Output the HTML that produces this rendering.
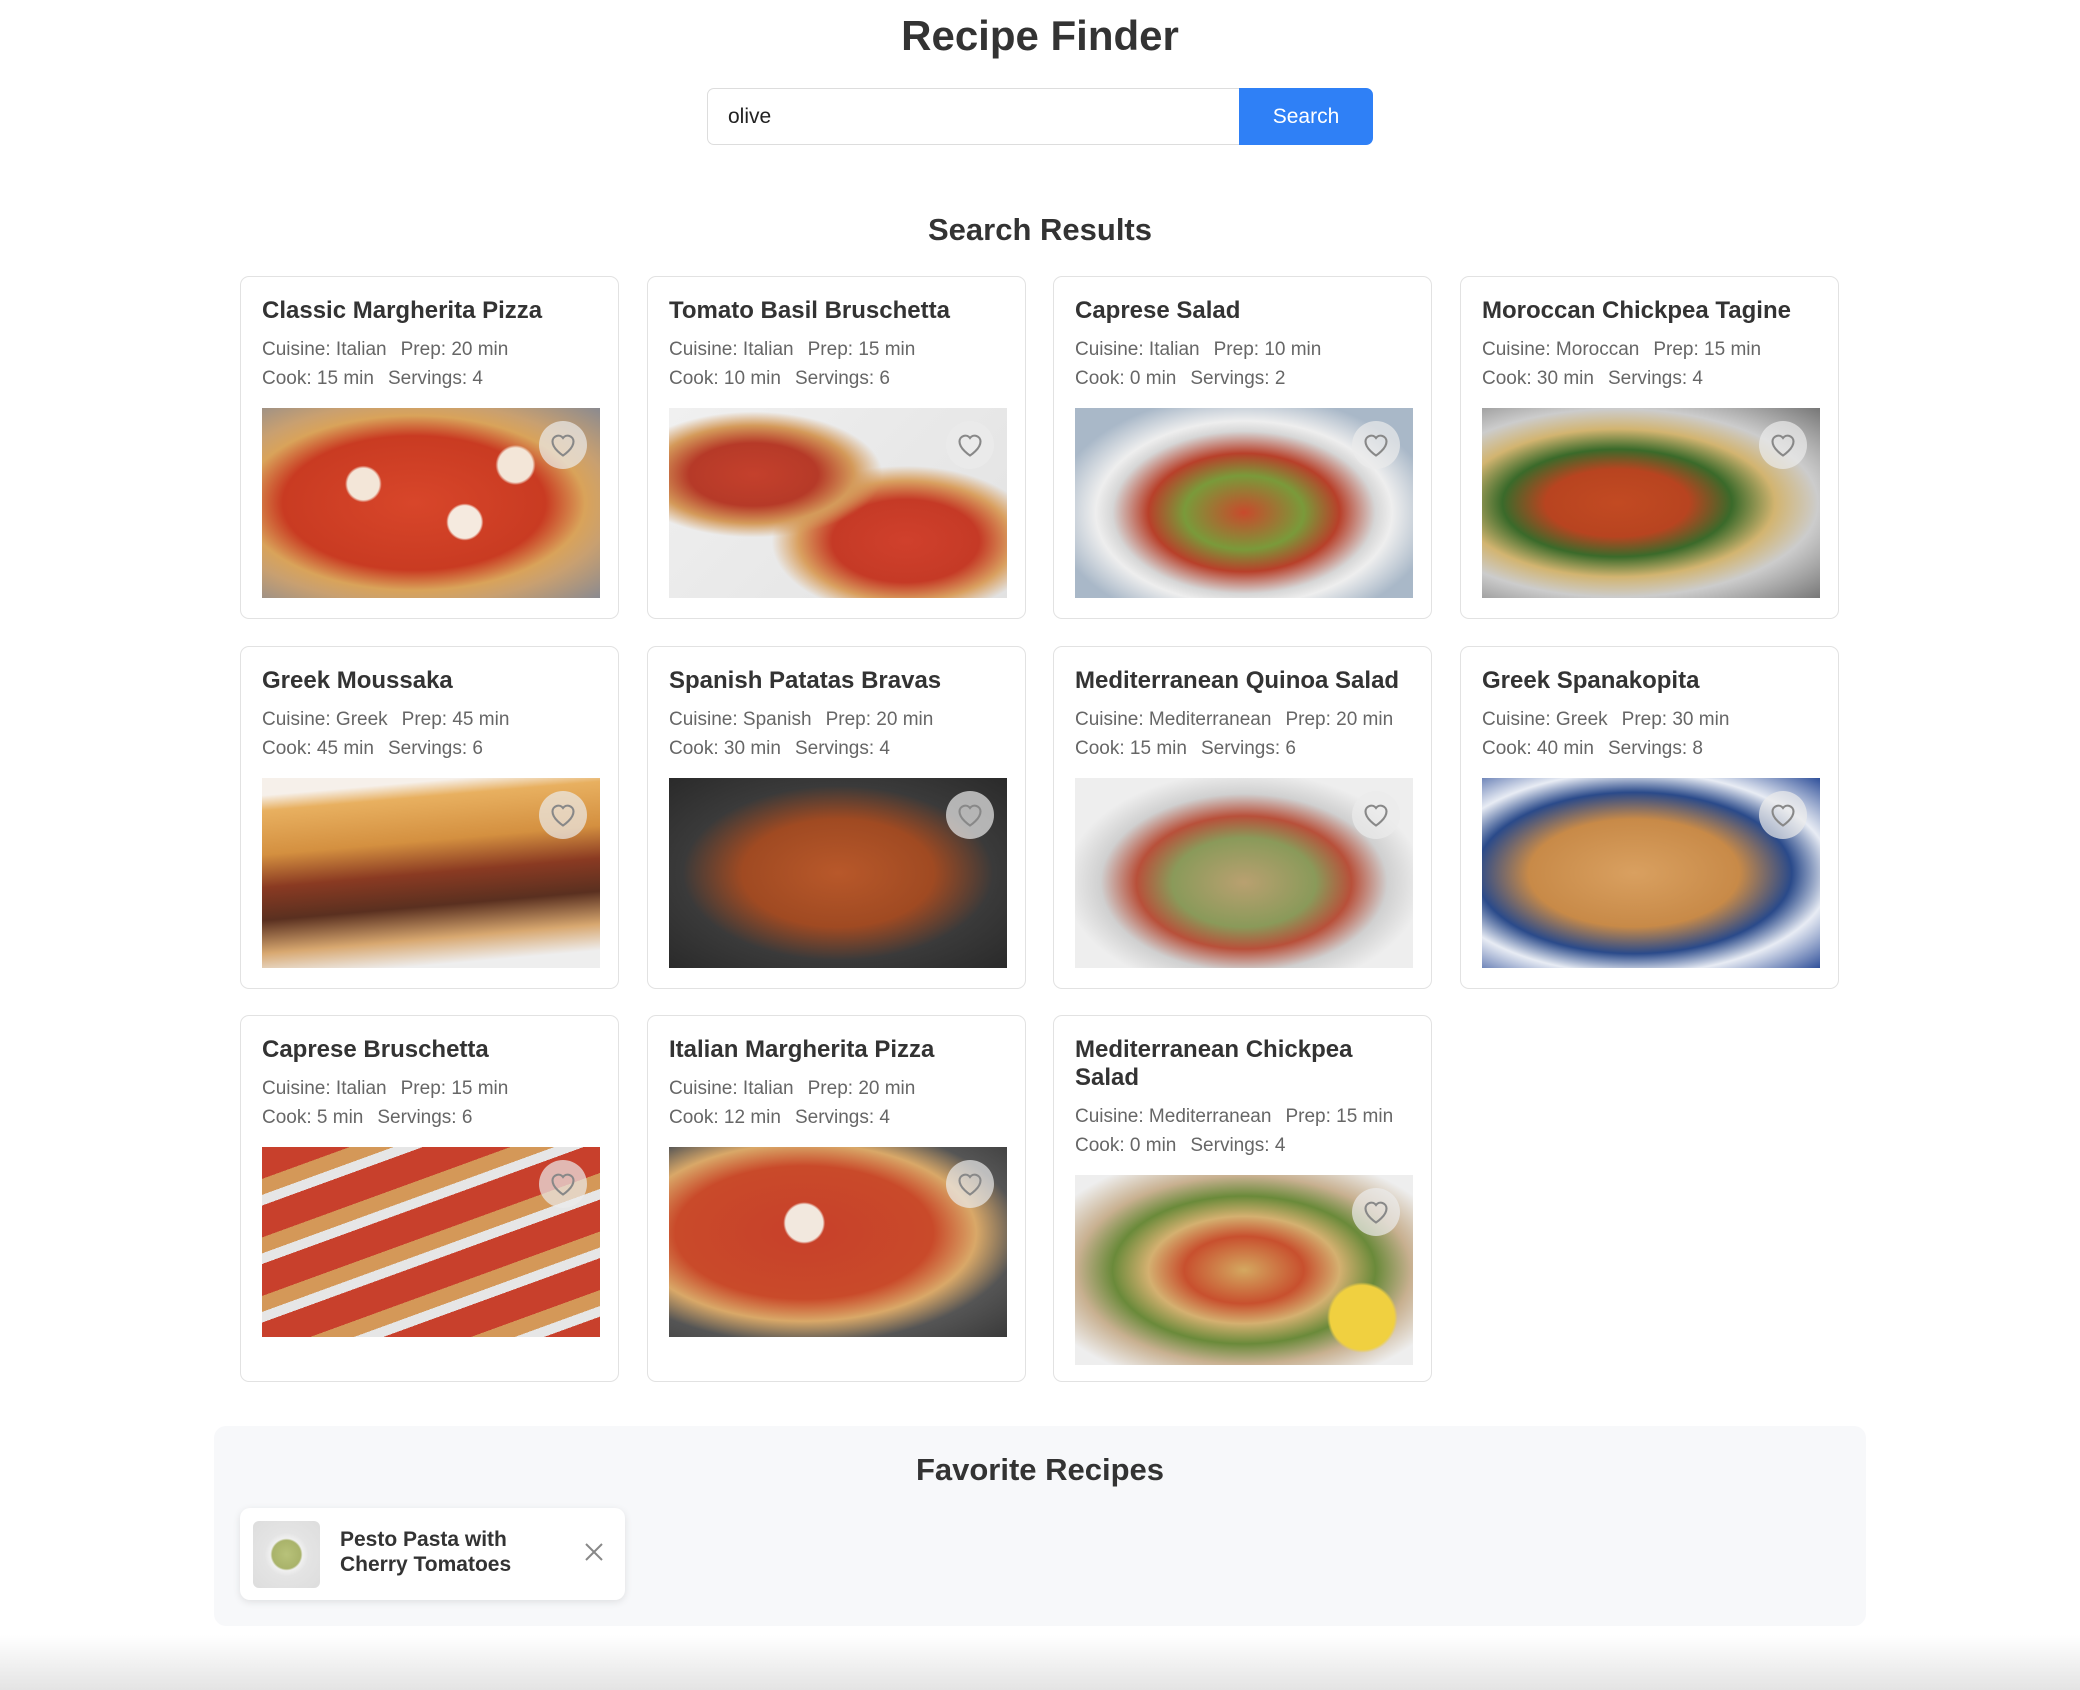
<!DOCTYPE html>
<html><head><meta charset="utf-8"><style>
*{box-sizing:border-box;margin:0;padding:0}
body{width:2080px;height:1690px;background:#fff;font-family:"Liberation Sans",sans-serif;color:#333;position:relative;overflow:hidden}
h1{position:absolute;top:12px;width:100%;text-align:center;font-size:42px;font-weight:bold;color:#333;line-height:48px}
.search{position:absolute;left:707px;top:88px;width:666px;height:57px;display:flex}
.search .in{flex:1;border:1px solid #ddd;border-right:none;border-radius:7px 0 0 7px;font-size:21px;padding:0 20px;line-height:55px;color:#222}
.search .bt{width:134px;background:#2f80f6;color:#fff;font-size:21px;text-align:center;line-height:57px;border-radius:0 7px 7px 0}
h2{position:absolute;width:100%;text-align:center;font-size:31px;font-weight:bold;color:#333}
.card{position:absolute;width:379px;border:1.5px solid #e2e2e2;border-radius:9px;padding:20px 20px 20px 21px;background:#fff}
.card .t{font-size:24px;font-weight:bold;line-height:28px;color:#333}
.card .m{font-size:19px;color:#666;line-height:29px}
.card .m1{margin-top:10px}
.card .m span{margin-right:14px}
.img{position:relative;margin-top:15px;width:338px;height:190px;overflow:hidden}
.heart{position:absolute;right:13px;top:13px;width:48px;height:48px;border-radius:50%;background:rgba(235,235,235,.7);display:flex;align-items:center;justify-content:center}
.fav{position:absolute;left:214px;top:1426px;width:1652px;height:200px;background:#f7f8fa;border-radius:12px}
.fc{position:absolute;left:26px;top:82px;width:385px;height:92px;background:#fff;border-radius:10px;box-shadow:0 2px 8px rgba(0,0,0,.1)}
.fc .pi{position:absolute;left:13px;top:13px;width:67px;height:67px;border-radius:6px;background:radial-gradient(circle at 50% 50%,#b8c27a 0,#a9b36a 30%,#f0f0f0 34%,#e4e4e4 46%,#ddd 100%)}
.fc .ft{position:absolute;left:100px;top:19px;font-size:21px;font-weight:bold;line-height:25px;color:#333}
.fc .x{position:absolute;right:20px;top:33px}
.bot{position:absolute;left:0;top:1635px;width:2080px;height:55px;background:linear-gradient(#fff,#e4e4e4)}
</style></head><body>
<h1>Recipe Finder</h1>
<div class="search"><div class="in">olive</div><div class="bt">Search</div></div>
<h2 style="top:212px">Search Results</h2>

<!-- row 1 -->
<div class="card" style="left:240px;top:276px"><div class="t">Classic Margherita Pizza</div><div class="m m1"><span>Cuisine: Italian</span>Prep: 20 min</div><div class="m"><span>Cook: 15 min</span>Servings: 4</div><div class="img" style="background:radial-gradient(circle at 30% 40%,#f3e6d8 0 6%,transparent 7%),radial-gradient(circle at 60% 60%,#f5eadf 0 7%,transparent 8%),radial-gradient(circle at 75% 30%,#f3e6d8 0 6%,transparent 7%),radial-gradient(ellipse at 45% 50%,#d8462a 0,#c93b22 50%,#d9a35a 65%,#c9a070 75%,#8a8a90 100%)"><div class="heart"><svg width="28" height="26" viewBox="0 0 24 22"><path d="M12 20s-9-5.6-9-12A5 5 0 0 1 12 5a5 5 0 0 1 9 3c0 6.4-9 12-9 12z" fill="none" stroke="#888" stroke-width="1.8"/></svg></div></div></div>

<div class="card" style="left:647px;top:276px"><div class="t">Tomato Basil Bruschetta</div><div class="m m1"><span>Cuisine: Italian</span>Prep: 15 min</div><div class="m"><span>Cook: 10 min</span>Servings: 6</div><div class="img" style="background:radial-gradient(ellipse at 25% 35%,#c4402c 0,#b63a28 18%,#d49a5a 28%,transparent 36%),radial-gradient(ellipse at 70% 70%,#d0402c 0,#c53a26 22%,#d9a060 32%,transparent 40%),linear-gradient(135deg,#f0f0f0,#e2e2e2)"><div class="heart"><svg width="28" height="26" viewBox="0 0 24 22"><path d="M12 20s-9-5.6-9-12A5 5 0 0 1 12 5a5 5 0 0 1 9 3c0 6.4-9 12-9 12z" fill="none" stroke="#888" stroke-width="1.8"/></svg></div></div></div>

<div class="card" style="left:1053px;top:276px"><div class="t">Caprese Salad</div><div class="m m1"><span>Cuisine: Italian</span>Prep: 10 min</div><div class="m"><span>Cook: 0 min</span>Servings: 2</div><div class="img" style="background:radial-gradient(ellipse at 50% 55%,#c84a2c 0,#7a9a3a 25%,#b8402a 40%,#d6d6d6 55%,#eee 62%,#a9b8c8 80%)"><div class="heart"><svg width="28" height="26" viewBox="0 0 24 22"><path d="M12 20s-9-5.6-9-12A5 5 0 0 1 12 5a5 5 0 0 1 9 3c0 6.4-9 12-9 12z" fill="none" stroke="#888" stroke-width="1.8"/></svg></div></div></div>

<div class="card" style="left:1460px;top:276px"><div class="t">Moroccan Chickpea Tagine</div><div class="m m1"><span>Cuisine: Moroccan</span>Prep: 15 min</div><div class="m"><span>Cook: 30 min</span>Servings: 4</div><div class="img" style="background:radial-gradient(ellipse at 40% 50%,#c24a22 0,#b84420 25%,#3a6a2a 40%,#d2b470 55%,#ccc 70%,#777 100%)"><div class="heart"><svg width="28" height="26" viewBox="0 0 24 22"><path d="M12 20s-9-5.6-9-12A5 5 0 0 1 12 5a5 5 0 0 1 9 3c0 6.4-9 12-9 12z" fill="none" stroke="#888" stroke-width="1.8"/></svg></div></div></div>

<!-- row 2 -->
<div class="card" style="left:240px;top:646px"><div class="t">Greek Moussaka</div><div class="m m1"><span>Cuisine: Greek</span>Prep: 45 min</div><div class="m"><span>Cook: 45 min</span>Servings: 6</div><div class="img" style="background:linear-gradient(175deg,#f6f0ea 0 8%,#e8b060 15%,#d49040 35%,#8a3a22 50%,#5a3020 65%,#d8a870 80%,#eee 92%)"><div class="heart"><svg width="28" height="26" viewBox="0 0 24 22"><path d="M12 20s-9-5.6-9-12A5 5 0 0 1 12 5a5 5 0 0 1 9 3c0 6.4-9 12-9 12z" fill="none" stroke="#888" stroke-width="1.8"/></svg></div></div></div>

<div class="card" style="left:647px;top:646px"><div class="t">Spanish Patatas Bravas</div><div class="m m1"><span>Cuisine: Spanish</span>Prep: 20 min</div><div class="m"><span>Cook: 30 min</span>Servings: 4</div><div class="img" style="background:radial-gradient(ellipse at 50% 50%,#b8582a 0,#a04a22 40%,#3a3a3a 65%,#2a2a2a 100%)"><div class="heart"><svg width="28" height="26" viewBox="0 0 24 22"><path d="M12 20s-9-5.6-9-12A5 5 0 0 1 12 5a5 5 0 0 1 9 3c0 6.4-9 12-9 12z" fill="none" stroke="#888" stroke-width="1.8"/></svg></div></div></div>

<div class="card" style="left:1053px;top:646px"><div class="t">Mediterranean Quinoa Salad</div><div class="m m1"><span>Cuisine: Mediterranean</span>Prep: 20 min</div><div class="m"><span>Cook: 15 min</span>Servings: 6</div><div class="img" style="background:radial-gradient(ellipse at 50% 55%,#b9a070 0,#8a9a5a 30%,#b8503a 45%,#d0d0d0 60%,#eee 75%)"><div class="heart"><svg width="28" height="26" viewBox="0 0 24 22"><path d="M12 20s-9-5.6-9-12A5 5 0 0 1 12 5a5 5 0 0 1 9 3c0 6.4-9 12-9 12z" fill="none" stroke="#888" stroke-width="1.8"/></svg></div></div></div>

<div class="card" style="left:1460px;top:646px"><div class="t">Greek Spanakopita</div><div class="m m1"><span>Cuisine: Greek</span>Prep: 30 min</div><div class="m"><span>Cook: 40 min</span>Servings: 8</div><div class="img" style="background:radial-gradient(ellipse at 45% 50%,#d9a060 0,#c88a48 40%,#2a4a8a 60%,#e8ecf4 75%,#30509a 100%)"><div class="heart"><svg width="28" height="26" viewBox="0 0 24 22"><path d="M12 20s-9-5.6-9-12A5 5 0 0 1 12 5a5 5 0 0 1 9 3c0 6.4-9 12-9 12z" fill="none" stroke="#888" stroke-width="1.8"/></svg></div></div></div>

<!-- row 3 -->
<div class="card" style="left:240px;top:1015px;height:367px"><div class="t">Caprese Bruschetta</div><div class="m m1"><span>Cuisine: Italian</span>Prep: 15 min</div><div class="m"><span>Cook: 5 min</span>Servings: 6</div><div class="img" style="background:repeating-linear-gradient(160deg,#c8402c 0 30px,#d49858 30px 45px,#e6e6e6 45px 55px)"><div class="heart"><svg width="28" height="26" viewBox="0 0 24 22"><path d="M12 20s-9-5.6-9-12A5 5 0 0 1 12 5a5 5 0 0 1 9 3c0 6.4-9 12-9 12z" fill="none" stroke="#888" stroke-width="1.8"/></svg></div></div></div>

<div class="card" style="left:647px;top:1015px;height:367px"><div class="t">Italian Margherita Pizza</div><div class="m m1"><span>Cuisine: Italian</span>Prep: 20 min</div><div class="m"><span>Cook: 12 min</span>Servings: 4</div><div class="img" style="background:radial-gradient(circle at 40% 40%,#f2e8de 0 8%,transparent 9%),radial-gradient(ellipse at 40% 45%,#c8402a 0,#c94a2a 45%,#d9a868 60%,#555 75%,#3a3a3a 100%)"><div class="heart"><svg width="28" height="26" viewBox="0 0 24 22"><path d="M12 20s-9-5.6-9-12A5 5 0 0 1 12 5a5 5 0 0 1 9 3c0 6.4-9 12-9 12z" fill="none" stroke="#888" stroke-width="1.8"/></svg></div></div></div>

<div class="card" style="left:1053px;top:1015px;height:367px"><div class="t">Mediterranean Chickpea Salad</div><div class="m m1"><span>Cuisine: Mediterranean</span>Prep: 15 min</div><div class="m"><span>Cook: 0 min</span>Servings: 4</div><div class="img" style="background:radial-gradient(circle at 85% 75%,#f0d040 0 10%,transparent 11%),radial-gradient(ellipse at 50% 50%,#d4a860 0,#c8502e 25%,#d4b070 40%,#6a8a3a 55%,#c8b090 70%,#eee 90%)"><div class="heart"><svg width="28" height="26" viewBox="0 0 24 22"><path d="M12 20s-9-5.6-9-12A5 5 0 0 1 12 5a5 5 0 0 1 9 3c0 6.4-9 12-9 12z" fill="none" stroke="#888" stroke-width="1.8"/></svg></div></div></div>

<div class="fav">
<h2 style="top:26px;left:0">Favorite Recipes</h2>
<div class="fc"><div class="pi"></div><div class="ft">Pesto Pasta with<br>Cherry Tomatoes</div>
<svg class="x" width="22" height="22" viewBox="0 0 22 22"><path d="M3 3L19 19M19 3L3 19" stroke="#888" stroke-width="2"/></svg></div>
</div>
<div class="bot"></div>
</body></html>
